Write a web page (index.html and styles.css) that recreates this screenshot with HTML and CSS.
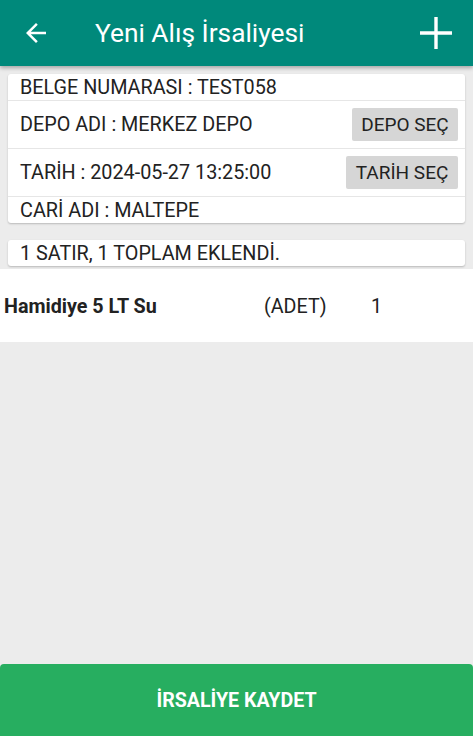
FILE: index.html
```html
<!DOCTYPE html>
<html lang="tr">
<head>
<meta charset="utf-8">
<title>Yeni Alış İrsaliyesi</title>
<link rel="stylesheet" href="styles.css">
</head>
<body>
<div class="app">
  <header class="toolbar">
    <svg class="back" width="30" height="30" viewBox="0 0 24 24"><path d="M20 11H7.83l5.59-5.59L12 4l-8 8 8 8 1.41-1.41L7.83 13H20v-2z" fill="#fff"/></svg>
    <h1 class="title">Yeni Alış İrsaliyesi</h1>
    <svg class="plus" width="34" height="34" viewBox="0 0 34 34"><path d="M15.3 1h3.4v14.3H33v3.4H18.7V33h-3.4V18.7H1v-3.4h14.3z" fill="#fff"/></svg>
  </header>
  <main class="content">
    <section class="card info">
      <div class="row short">BELGE NUMARASI : TEST058</div>
      <div class="row tall"><span>DEPO ADI : MERKEZ DEPO</span><button class="btn btn-depo">DEPO SEÇ</button></div>
      <div class="row tall"><span>TARİH : 2024-05-27 13:25:00</span><button class="btn btn-tarih">TARİH SEÇ</button></div>
      <div class="row short last">CARİ ADI : MALTEPE</div>
    </section>
    <section class="card status">1 SATIR, 1 TOPLAM EKLENDİ.</section>
  </main>
  <ul class="list">
    <li class="item"><span class="name">Hamidiye 5 LT Su</span><span class="unit">(ADET)</span><span class="qty">1</span></li>
  </ul>
  <div class="spacer"></div>
  <button class="save">İRSALİYE KAYDET</button>
</div>
</body>
</html>
```
FILE: styles.css
```css
* { box-sizing: border-box; }
html, body { margin: 0; padding: 0; }
body {
  background: #ececec;
  font-family: Roboto, "Noto Sans", sans-serif;
  color: #222;
}
.app {
  width: 473px;
  height: 736px;
  display: flex;
  flex-direction: column;
  overflow: hidden;
}
.toolbar {
  height: 66px;
  flex: none;
  background: #00897b;
  display: flex;
  align-items: center;
  box-shadow: 0 2px 4px rgba(0,0,0,0.3);
  position: relative;
  z-index: 1;
}
.back { margin-left: 21px; flex: none; }
.title {
  margin: 0 0 0 44px;
  flex: 1;
  font-size: 26.3px;
  font-weight: 400;
  color: #fff;
}
.plus { margin-right: 20px; margin-bottom: 1px; flex: none; }
.content {
  padding: 8px 8px 0;
  display: flex;
  flex-direction: column;
}
.card {
  background: #fff;
  border-radius: 3px;
  box-shadow: 0 1px 2px rgba(0,0,0,0.22);
}
.row {
  display: flex;
  align-items: center;
  justify-content: space-between;
  padding: 0 7px 0 12px;
  font-size: 19.8px;
  border-bottom: 1px solid #e6e6e6;
}
.row.short { height: 27px; }
.row.tall { height: 48px; }
.row.last { border-bottom: none; height: 26px; }
.btn {
  height: 33px;
  border: none;
  border-radius: 2px;
  background: #d6d6d6;
  color: #222;
  font-family: Roboto, sans-serif;
  font-size: 19px;
  padding: 0;
}
.btn-depo { width: 106px; }
.btn-tarih { width: 112px; }
.status {
  margin-top: 17px;
  height: 26px;
  padding: 0 12px;
  font-size: 19.8px;
  display: flex;
  align-items: center;
}
.list {
  list-style: none;
  margin: 3px 0 0;
  padding: 0;
  background: #fff;
}
.item {
  height: 73px;
  display: flex;
  align-items: center;
  font-size: 19.7px;
  padding-top: 2px;
}
.name { width: 264px; padding-left: 4px; font-weight: 700; color: #222; }
.unit { width: 107px; }
.spacer { flex: 1; }
.save {
  height: 72px;
  flex: none;
  border: none;
  border-radius: 4px 4px 0 0;
  background: #27ae60;
  color: #fff;
  font-family: Roboto, sans-serif;
  font-size: 19.6px;
  font-weight: 700;
  width: 100%;
}
```
